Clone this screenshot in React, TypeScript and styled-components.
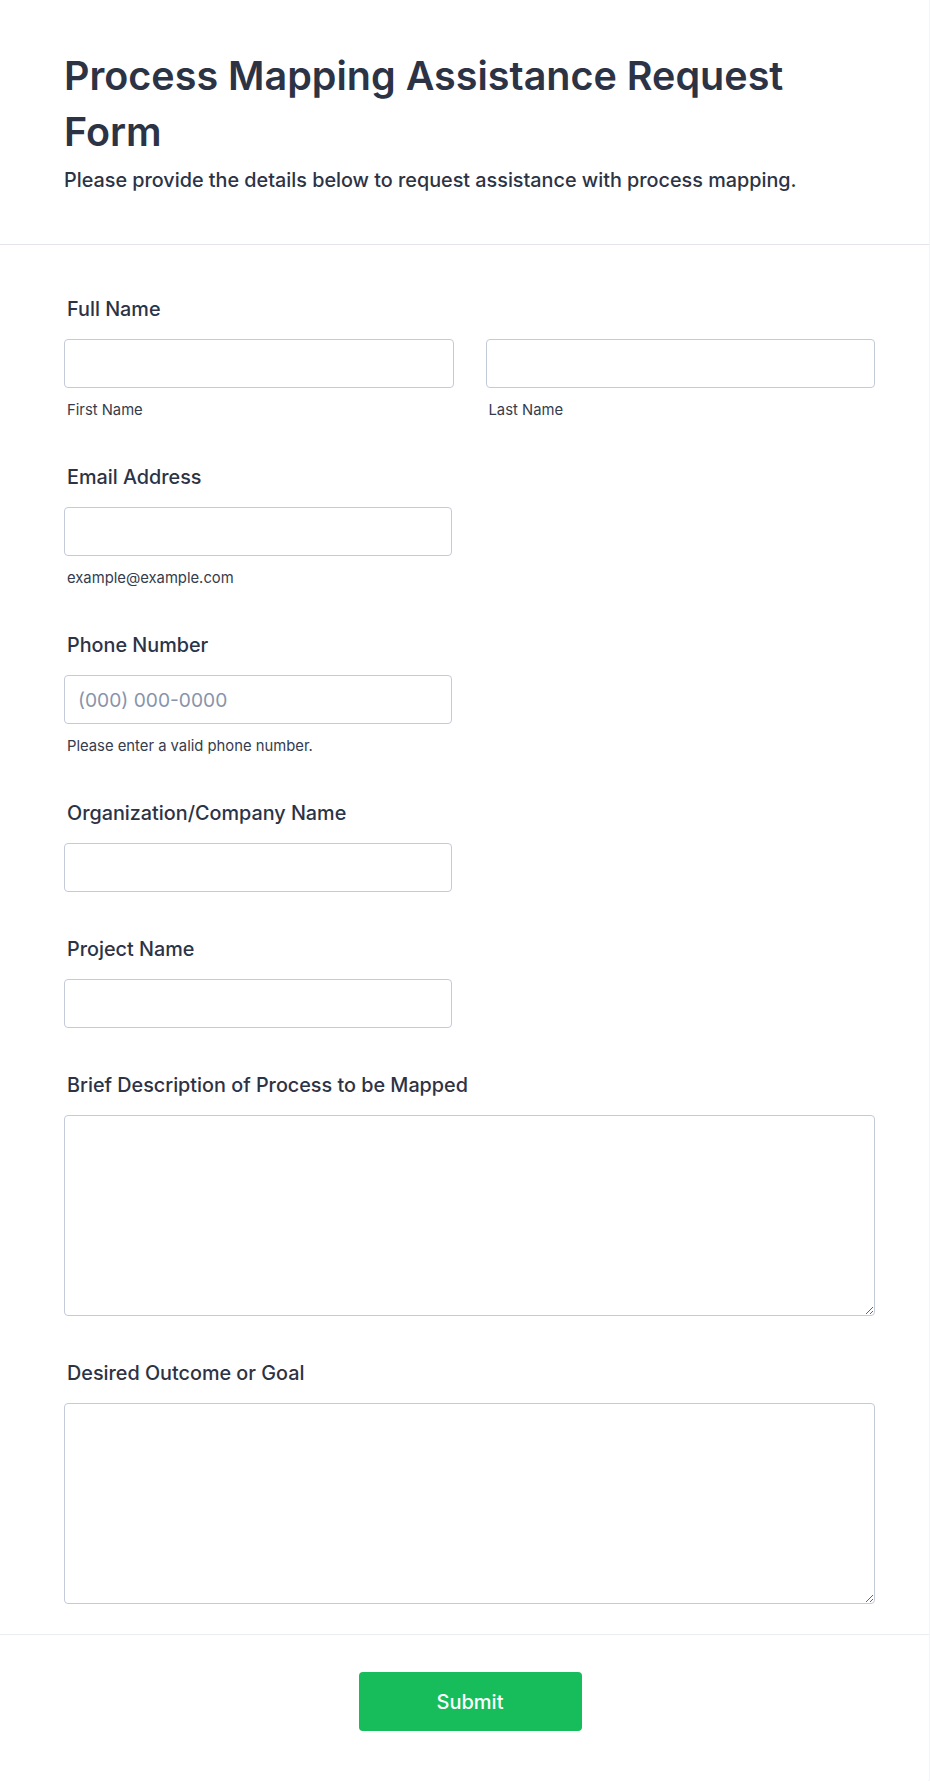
import React from 'react';
import styled, { createGlobalStyle } from 'styled-components';

const GlobalStyle = createGlobalStyle`
  * { box-sizing: border-box; }
  body {
    margin: 0;
    background: #ffffff;
    font-family: Inter, "Noto Sans", "Liberation Sans", sans-serif;
    color: #2c3345;
  }
`;

type FieldDef = {
  label: string;
  kind: 'input' | 'textarea' | 'name';
  placeholder?: string;
  sublabel?: string;
};

const fields: FieldDef[] = [
  { label: 'Full Name', kind: 'name' },
  { label: 'Email Address', kind: 'input', sublabel: 'example@example.com' },
  {
    label: 'Phone Number',
    kind: 'input',
    placeholder: '(000) 000-0000',
    sublabel: 'Please enter a valid phone number.',
  },
  { label: 'Organization/Company Name', kind: 'input' },
  { label: 'Project Name', kind: 'input' },
  { label: 'Brief Description of Process to be Mapped', kind: 'textarea' },
  { label: 'Desired Outcome or Goal', kind: 'textarea' },
];

const App = () => {
  return (
    <>
      <GlobalStyle />
      <Form onSubmit={(e) => e.preventDefault()}>
        <Header>
          <Title>Process Mapping Assistance Request Form</Title>
          <Subtitle>
            Please provide the details below to request assistance with process mapping.
          </Subtitle>
        </Header>

        <Fields>
          {fields.map((f) => (
            <Field key={f.label}>
              <Label>{f.label}</Label>
              {f.kind === 'name' && (
                <NameRow>
                  <div>
                    <TextInput type="text" />
                    <Sublabel>First Name</Sublabel>
                  </div>
                  <div>
                    <TextInput type="text" />
                    <Sublabel>Last Name</Sublabel>
                  </div>
                </NameRow>
              )}
              {f.kind === 'input' && (
                <>
                  <TextInput type="text" placeholder={f.placeholder} $narrow />
                  {f.sublabel && <Sublabel>{f.sublabel}</Sublabel>}
                </>
              )}
              {f.kind === 'textarea' && <TextArea />}
            </Field>
          ))}
        </Fields>

        <Footer>
          <SubmitButton type="submit">Submit</SubmitButton>
        </Footer>
      </Form>
    </>
  );
};

const Form = styled.form`
  width: 930px;
  min-height: 1781px;
  border-right: 1px solid #f4f5f8;
  border-bottom: 1px solid #f4f5f8;
  border-bottom-right-radius: 3px;
  background: #ffffff;
`;

const Header = styled.div`
  padding: 48px 54px 50px 64px;
  border-bottom: 1px solid #e3e5ec;
`;

const Title = styled.h1`
  margin: 0;
  font-size: 39.5px;
  line-height: 56px;
  font-weight: 600;
  color: #2c3345;
`;

const Subtitle = styled.p`
  margin: 6px 0 0;
  font-size: 19.8px;
  line-height: 28px;
  font-weight: 500;
  color: #2c3345;
`;

const Fields = styled.div`
  padding: 50px 54px 30px 64px;
  display: flex;
  flex-direction: column;
  gap: 43px;
`;

const Field = styled.div`
  display: flex;
  flex-direction: column;
`;

const Label = styled.label`
  display: block;
  padding-left: 3px;
  margin-bottom: 16px;
  font-size: 19.8px;
  line-height: 28px;
  font-weight: 500;
  color: #2c3345;
`;

const NameRow = styled.div`
  display: grid;
  grid-template-columns: 1fr 1fr;
  column-gap: 32px;
`;

const TextInput = styled.input<{ $narrow?: boolean }>`
  display: block;
  width: ${(p) => (p.$narrow ? '388px' : '100%')};
  height: 49px;
  padding: 0 13px;
  border: 1px solid #c3cad8;
  border-radius: 4px;
  background: #ffffff;
  font-family: Inter, "Noto Sans", "Liberation Sans", sans-serif;
  font-size: 19.2px;
  color: #2c3345;
  outline: none;

  &::placeholder {
    color: #8894ab;
  }
`;

const Sublabel = styled.div`
  margin-top: 12px;
  padding-left: 3px;
  font-size: 14.8px;
  line-height: 20px;
  font-weight: 400;
  color: #343c4e;
`;

const TextArea = styled.textarea`
  display: block;
  width: 100%;
  height: 201px;
  padding: 10px 14px;
  border: 1px solid #c3cad8;
  border-radius: 4px;
  resize: vertical;
  font-family: Inter, "Noto Sans", "Liberation Sans", sans-serif;
  font-size: 18px;
  color: #2c3345;
  outline: none;
`;

const Footer = styled.div`
  border-top: 1px solid #ebedf2;
  padding: 37px 54px 50px 65px;
  display: flex;
  justify-content: center;
`;

const SubmitButton = styled.button`
  width: 223px;
  height: 59px;
  border: none;
  border-radius: 4px;
  background: #18bd5b;
  color: #ffffff;
  font-family: Inter, "Noto Sans", "Liberation Sans", sans-serif;
  font-size: 20px;
  font-weight: 500;
  cursor: pointer;
`;

export default App;
